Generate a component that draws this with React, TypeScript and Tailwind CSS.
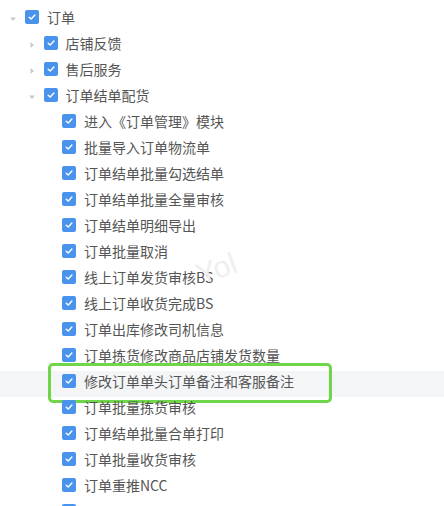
import React from "react";

type Item = { label: string; level: number; caret?: "down" | "right" | null; hl?: boolean; hidden?: boolean };

const items: Item[] = [
  { label: "订单", level: 0, caret: "down" },
  { label: "店铺反馈", level: 1, caret: "right" },
  { label: "售后服务", level: 1, caret: "right" },
  { label: "订单结单配货", level: 1, caret: "down" },
  { label: "进入《订单管理》模块", level: 2 },
  { label: "批量导入订单物流单", level: 2 },
  { label: "订单结单批量勾选结单", level: 2 },
  { label: "订单结单批量全量审核", level: 2 },
  { label: "订单结单明细导出", level: 2 },
  { label: "订单批量取消", level: 2 },
  { label: "线上订单发货审核BS", level: 2 },
  { label: "线上订单收货完成BS", level: 2 },
  { label: "订单出库修改司机信息", level: 2 },
  { label: "订单拣货修改商品店铺发货数量", level: 2 },
  { label: "修改订单单头订单备注和客服备注", level: 2, hl: true },
  { label: "订单批量拣货审核", level: 2 },
  { label: "订单结单批量合单打印", level: 2 },
  { label: "订单批量收货审核", level: 2 },
  { label: "订单重推NCC", level: 2 },
  { label: "", level: 2, hidden: true },
];

function Caret({ dir }: { dir: "down" | "right" }) {
  return (
    <svg width="8" height="8" viewBox="0 0 8 8" className="block translate-y-[2px]">
      {dir === "down" ? (
        <path d="M1 2.5 L7 2.5 L4 6 Z" fill="#cacaca" />
      ) : (
        <path d="M2.5 1 L6 4 L2.5 7 Z" fill="#cacaca" />
      )}
    </svg>
  );
}

function Check() {
  return (
    <span className="flex h-[14px] w-[14px] shrink-0 items-center justify-center rounded-[2px] bg-[#4a93ec]">
      <svg width="10" height="10" viewBox="0 0 10 10">
        <path d="M2.2 5.2 L4.2 7 L7.9 3" fill="none" stroke="#fff" strokeWidth="1.4" strokeLinecap="round" strokeLinejoin="round" />
      </svg>
    </span>
  );
}

export default function App() {
  return (
    <div
      className="relative h-[506px] w-[444px] overflow-hidden bg-white"
      style={{ fontFamily: '"Noto Sans CJK SC", "Noto Sans", sans-serif' }}
    >
      <div className="flex flex-col pt-[4px]">
        {items.map((it, i) => (
          <div key={i} className="relative flex h-[26px] items-center">
            {it.hl ? (
              <div className="absolute left-0 right-0 top-[3px] h-[26px] bg-[#f4f5f7]" />
            ) : null}
            <div
              className="relative flex items-center"
              style={{ paddingLeft: 8 + it.level * 18.5 }}
            >
              <span className="flex w-[10px] items-center justify-center">
                {it.caret ? <Caret dir={it.caret} /> : null}
              </span>
              <span className="ml-[7px]">
                <Check />
              </span>
              {it.hidden ? null : (
                <span className="ml-[8px] whitespace-nowrap text-[14px] leading-[26px] text-[#555555]">
                  {it.label}
                </span>
              )}
            </div>
            {it.hl ? (
              <div className="pointer-events-none absolute left-[48px] top-[-5px] h-[40px] w-[284px] rounded-[5px] border-[3px] border-[#6fd64a]" />
            ) : null}
          </div>
        ))}
      </div>
      <div
        className="pointer-events-none absolute left-[196px] top-[246px] -rotate-[20deg] text-[30px] text-[#efefef]"
        style={{ fontFamily: '"Liberation Sans", sans-serif' }}
      >
        Yol
      </div>
    </div>
  );
}
